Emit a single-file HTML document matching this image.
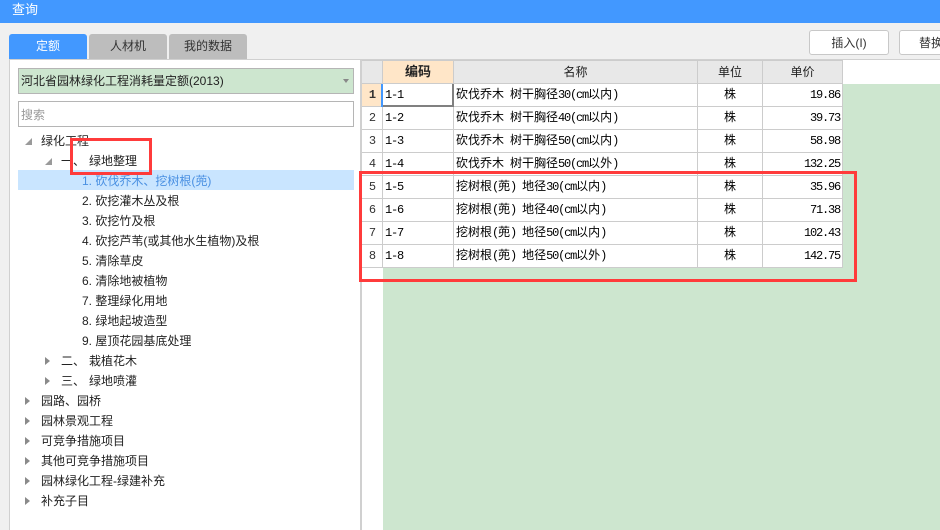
<!DOCTYPE html>
<html lang="zh"><head><meta charset="utf-8"><title>查询</title>
<style>
html,body{margin:0;padding:0}
body{width:940px;height:530px;overflow:hidden;position:relative;background:#fff;font:12px/20px "Liberation Sans","Noto Sans CJK SC",sans-serif;color:#333}
div{position:absolute;box-sizing:border-box;white-space:nowrap}
.tab{top:34px;height:25px;width:78px;background:#bdbdbd;border-radius:3px 3px 0 0;text-align:center;line-height:25px;color:#333}
.btn{top:30px;height:25px;background:#fff;border:1px solid #c8c8c8;border-radius:3px;text-align:center;line-height:24px;color:#333}
.t{left:0;height:20px;line-height:20px;color:#222}
.ar{width:0;height:0;border-style:solid}
.open{border-width:0 0 7px 7px;border-color:transparent transparent #9a9a9a transparent}
.close{border-width:4px 0 4px 5px;border-color:transparent transparent transparent #8a8a8a}
.g{font-family:"WenQuanYi Zen Hei","Noto Sans CJK SC",sans-serif;font-size:12px;line-height:20px;color:#000;height:22px}
.m{font-family:"Liberation Mono",monospace;font-size:12px;letter-spacing:-1.2px}
.v{line-height:22px}
.hl{background:#ccc}
.hd{top:61px;height:22px;background:#e8e8e8;text-align:center;line-height:22px;color:#222;font-size:12px}
.rh{left:363px;width:19px;text-align:center;font-family:"Liberation Mono",monospace;font-size:12px;line-height:22px;color:#333;margin-top:0}
.red{border:3px solid #ff3b3b;background:transparent}
</style></head><body>
<div style="left:0;top:0;width:940px;height:23px;background:#4298ff;color:#fff;font-size:13px;line-height:19px;padding-left:12px">查询</div>
<div style="left:0;top:23px;width:940px;height:37px;background:#f0f0f0"></div>
<div style="left:0;top:60px;width:9px;height:470px;background:#f0f0f0"></div>
<div style="left:9px;top:59px;width:931px;height:1px;background:#d0d0d0"></div>
<div style="left:9px;top:59px;width:1px;height:471px;background:#d0d0d0"></div>
<div class="tab" style="left:9px;background:#4298ff;color:#fff">定额</div>
<div class="tab" style="left:89px">人材机</div>
<div class="tab" style="left:169px">我的数据</div>
<div class="btn" style="left:809px;width:80px">插入(I)</div>
<div class="btn" style="left:899px;width:60px;text-align:left;padding-left:19px">替换</div>

<div style="left:18px;top:68px;width:336px;height:26px;background:#cde6cf;border:1px solid #b5b5b5;line-height:24px;padding-left:2px;color:#222;font-size:12px">河北省园林绿化工程消耗量定额(2013)</div>
<div class="ar" style="left:343px;top:79px;border-width:4px 3px 0 3px;border-color:#888 transparent transparent transparent"></div>
<div style="left:18px;top:101px;width:336px;height:26px;background:#fff;border:1px solid #b5b5b5;line-height:26px;padding-left:2px;color:#999">搜索</div>

<div style="left:18px;top:170px;width:336px;height:20px;background:#c9e5ff"></div>

<div class="ar open" style="left:25px;top:138px"></div>
<div class="t" style="left:41px;top:131px">绿化工程</div>
<div class="ar open" style="left:45px;top:158px"></div>
<div class="t" style="left:61px;top:151px">一、</div><div class="t" style="left:89px;top:151px">绿地整理</div>
<div class="t" style="left:82px;top:171px;color:#4a90e2">1. 砍伐乔木、挖树根(蔸)</div>
<div class="t" style="left:82px;top:191px">2. 砍挖灌木丛及根</div>
<div class="t" style="left:82px;top:211px">3. 砍挖竹及根</div>
<div class="t" style="left:82px;top:231px">4. 砍挖芦苇(或其他水生植物)及根</div>
<div class="t" style="left:82px;top:251px">5. 清除草皮</div>
<div class="t" style="left:82px;top:271px">6. 清除地被植物</div>
<div class="t" style="left:82px;top:291px">7. 整理绿化用地</div>
<div class="t" style="left:82px;top:311px">8. 绿地起坡造型</div>
<div class="t" style="left:82px;top:331px">9. 屋顶花园基底处理</div>
<div class="ar close" style="left:45px;top:357px"></div>
<div class="t" style="left:61px;top:351px">二、</div><div class="t" style="left:89px;top:351px">栽植花木</div>
<div class="ar close" style="left:45px;top:377px"></div>
<div class="t" style="left:61px;top:371px">三、</div><div class="t" style="left:89px;top:371px">绿地喷灌</div>
<div class="ar close" style="left:25px;top:397px"></div><div class="t" style="left:41px;top:391px">园路、园桥</div>
<div class="ar close" style="left:25px;top:417px"></div><div class="t" style="left:41px;top:411px">园林景观工程</div>
<div class="ar close" style="left:25px;top:437px"></div><div class="t" style="left:41px;top:431px">可竞争措施项目</div>
<div class="ar close" style="left:25px;top:457px"></div><div class="t" style="left:41px;top:451px">其他可竞争措施项目</div>
<div class="ar close" style="left:25px;top:477px"></div><div class="t" style="left:41px;top:471px">园林绿化工程-绿建补充</div>
<div class="ar close" style="left:25px;top:497px"></div><div class="t" style="left:41px;top:491px">补充子目</div>

<div style="left:360px;top:60px;width:2px;height:470px;background:#d0d0d0"></div>
<div style="left:383px;top:84px;width:557px;height:446px;background:#cde6cf"></div>
<div style="left:362px;top:84px;width:481px;height:184px;background:#fff"></div>

<div class="hd" style="left:362px;width:20px"></div>
<div class="hd" style="left:383px;width:70px;background:#ffe6c8;font-weight:bold;font-size:13px">编码</div>
<div class="hd" style="left:454px;width:243px">名称</div>
<div class="hd" style="left:698px;width:64px">单位</div>
<div class="hd" style="left:763px;width:79px">单价</div>
<div style="left:362px;top:84px;width:20px;height:22px;background:#ffe6c8"></div>

<div class="hl" style="left:362px;top:60px;width:481px;height:1px"></div>
<div class="hl" style="left:362px;top:83px;width:481px;height:1px"></div>
<div class="hl" style="left:362px;top:106px;width:481px;height:1px"></div>
<div class="hl" style="left:362px;top:129px;width:481px;height:1px"></div>
<div class="hl" style="left:362px;top:152px;width:481px;height:1px"></div>
<div class="hl" style="left:362px;top:175px;width:481px;height:1px"></div>
<div class="hl" style="left:362px;top:198px;width:481px;height:1px"></div>
<div class="hl" style="left:362px;top:221px;width:481px;height:1px"></div>
<div class="hl" style="left:362px;top:244px;width:481px;height:1px"></div>
<div class="hl" style="left:362px;top:267px;width:481px;height:1px"></div>
<div class="hl" style="left:382px;top:60px;width:1px;height:208px"></div>
<div class="hl" style="left:453px;top:60px;width:1px;height:208px"></div>
<div class="hl" style="left:697px;top:60px;width:1px;height:208px"></div>
<div class="hl" style="left:762px;top:60px;width:1px;height:208px"></div>
<div class="hl" style="left:842px;top:60px;width:1px;height:208px"></div>
<div style="left:381px;top:84px;width:2px;height:23px;background:#4298ff"></div>
<div style="left:383px;top:105px;width:71px;height:2px;background:#808080"></div>
<div style="left:452px;top:84px;width:2px;height:23px;background:#808080"></div>

<div class="g rh" style="top:84px;font-weight:bold">1</div>
<div class="g rh" style="top:107px">2</div>
<div class="g rh" style="top:130px">3</div>
<div class="g rh" style="top:153px">4</div>
<div class="g rh" style="top:176px">5</div>
<div class="g rh" style="top:199px">6</div>
<div class="g rh" style="top:222px">7</div>
<div class="g rh" style="top:245px">8</div>

<div class="g m v" style="left:385px;top:84px">1-1</div>
<div class="g m v" style="left:385px;top:107px">1-2</div>
<div class="g m v" style="left:385px;top:130px">1-3</div>
<div class="g m v" style="left:385px;top:153px">1-4</div>
<div class="g m v" style="left:385px;top:176px">1-5</div>
<div class="g m v" style="left:385px;top:199px">1-6</div>
<div class="g m v" style="left:385px;top:222px">1-7</div>
<div class="g m v" style="left:385px;top:245px">1-8</div>

<div class="g" style="left:456px;top:84px">砍伐乔木<span class="m"> </span>树干胸径<span class="m">30(cm</span>以内<span class="m">)</span></div>
<div class="g" style="left:456px;top:107px">砍伐乔木<span class="m"> </span>树干胸径<span class="m">40(cm</span>以内<span class="m">)</span></div>
<div class="g" style="left:456px;top:130px">砍伐乔木<span class="m"> </span>树干胸径<span class="m">50(cm</span>以内<span class="m">)</span></div>
<div class="g" style="left:456px;top:153px">砍伐乔木<span class="m"> </span>树干胸径<span class="m">50(cm</span>以外<span class="m">)</span></div>
<div class="g" style="left:456px;top:176px">挖树根<span class="m">(</span>蔸<span class="m">) </span>地径<span class="m">30(cm</span>以内<span class="m">)</span></div>
<div class="g" style="left:456px;top:199px">挖树根<span class="m">(</span>蔸<span class="m">) </span>地径<span class="m">40(cm</span>以内<span class="m">)</span></div>
<div class="g" style="left:456px;top:222px">挖树根<span class="m">(</span>蔸<span class="m">) </span>地径<span class="m">50(cm</span>以内<span class="m">)</span></div>
<div class="g" style="left:456px;top:245px">挖树根<span class="m">(</span>蔸<span class="m">) </span>地径<span class="m">50(cm</span>以外<span class="m">)</span></div>

<div class="g" style="left:698px;top:84px;width:64px;text-align:center">株</div>
<div class="g" style="left:698px;top:107px;width:64px;text-align:center">株</div>
<div class="g" style="left:698px;top:130px;width:64px;text-align:center">株</div>
<div class="g" style="left:698px;top:153px;width:64px;text-align:center">株</div>
<div class="g" style="left:698px;top:176px;width:64px;text-align:center">株</div>
<div class="g" style="left:698px;top:199px;width:64px;text-align:center">株</div>
<div class="g" style="left:698px;top:222px;width:64px;text-align:center">株</div>
<div class="g" style="left:698px;top:245px;width:64px;text-align:center">株</div>

<div class="g m v" style="left:763px;top:84px;width:77px;text-align:right">19.86</div>
<div class="g m v" style="left:763px;top:107px;width:77px;text-align:right">39.73</div>
<div class="g m v" style="left:763px;top:130px;width:77px;text-align:right">58.98</div>
<div class="g m v" style="left:763px;top:153px;width:77px;text-align:right">132.25</div>
<div class="g m v" style="left:763px;top:176px;width:77px;text-align:right">35.96</div>
<div class="g m v" style="left:763px;top:199px;width:77px;text-align:right">71.38</div>
<div class="g m v" style="left:763px;top:222px;width:77px;text-align:right">102.43</div>
<div class="g m v" style="left:763px;top:245px;width:77px;text-align:right">142.75</div>

<div class="red" style="left:70px;top:138px;width:82px;height:37px"></div>
<div class="red" style="left:359px;top:171px;width:498px;height:111px"></div>
</body></html>
